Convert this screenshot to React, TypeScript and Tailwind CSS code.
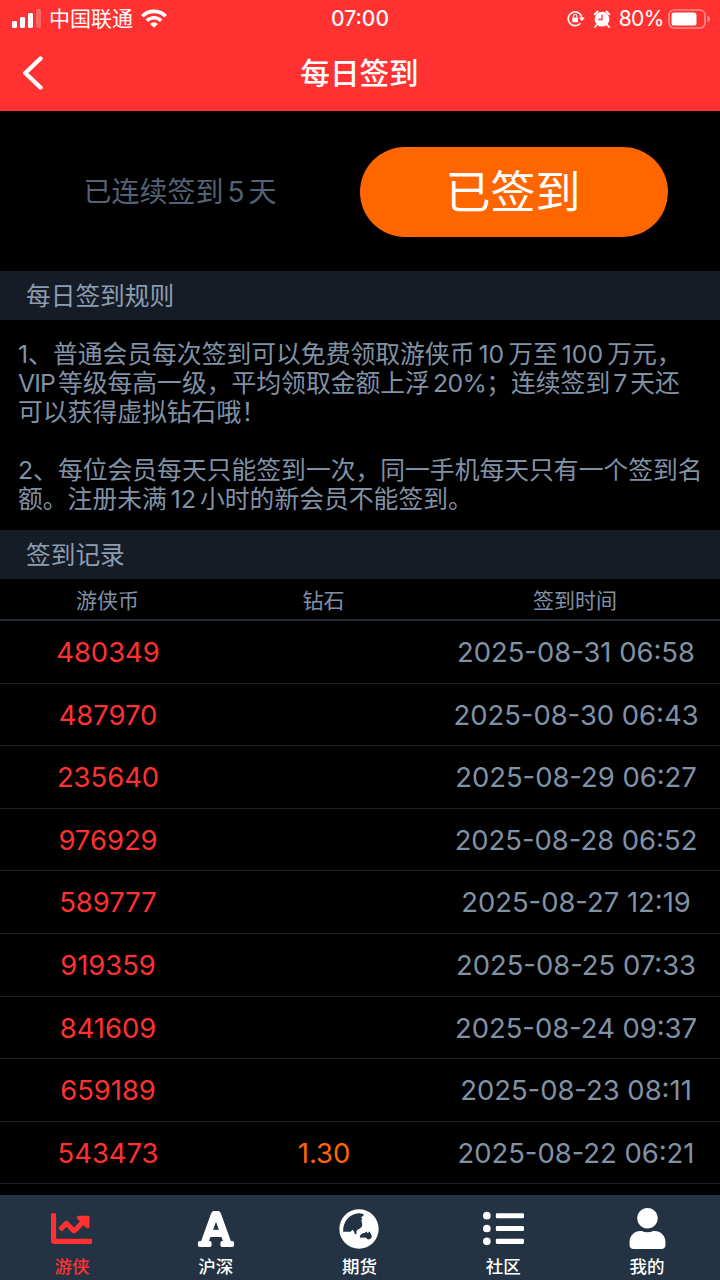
import type { ReactNode } from "react";
import { FaChartLine, FaFont, FaListUl, FaUser } from "react-icons/fa";
import clsx from "clsx";

const records = [
    { coins: "480349", diamond: "", time: "2025-08-31 06:58" },
    { coins: "487970", diamond: "", time: "2025-08-30 06:43" },
    { coins: "235640", diamond: "", time: "2025-08-29 06:27" },
    { coins: "976929", diamond: "", time: "2025-08-28 06:52" },
    { coins: "589777", diamond: "", time: "2025-08-27 12:19" },
    { coins: "919359", diamond: "", time: "2025-08-25 07:33" },
    { coins: "841609", diamond: "", time: "2025-08-24 09:37" },
    { coins: "659189", diamond: "", time: "2025-08-23 08:11" },
    { coins: "543473", diamond: "1.30", time: "2025-08-22 06:21" },
];

// Globe turned to Asia and Australia
function GlobeIcon() {
    return (
        <svg width="40" height="40" viewBox="118 83 120 121">
            <circle cx="178" cy="143.5" r="59.5" fill="currentColor" />
            <path
                d="M130 152C129 122 148 97 178 96L192 98L191 104L184 108L188 112L185 118L188 128L187 136L180 143L174 145L170 151L171 157L166 160L163 151L158 146L153 152Z"
                fill="#233343"
            />
            <path
                d="M180 164L188 157L196 155L200 151L205 156L209 150L215 160L217 168L212 174L205 175L199 170L190 169L182 170Z"
                fill="#233343"
            />
        </svg>
    );
}

const tabs = [
    { label: "游侠", icon: <FaChartLine size={41} />, active: true },
    { label: "沪深", icon: <FaFont size={40} stroke="currentColor" strokeWidth={14} className="overflow-visible" /> },
    { label: "期货", icon: <GlobeIcon /> },
    { label: "社区", icon: <FaListUl size={41} /> },
    { label: "我的", icon: <FaUser size={41} /> },
];

// Latin text inside a Chinese sentence gets a little air around it
function Num({ children }: { children: ReactNode }) {
    return <span className="mx-[4px]">{children}</span>;
}

function StatusBar() {
    return (
        <div className="grid h-[37px] grid-cols-3 items-center pl-[12px] pr-[9px] text-[21px] leading-none">
            <div className="flex items-center">
                <svg width="30" height="19" viewBox="0 0 30 19" fill="white">
                    <rect x="0" y="12" width="5" height="7" rx="1.4" />
                    <rect x="8" y="8" width="5" height="11" rx="1.4" />
                    <rect x="16" y="4" width="5" height="15" rx="1.4" />
                    <rect x="24" y="0" width="5" height="19" rx="1.4" opacity="0.25" />
                </svg>
                <span className="ml-[7px]">中国联通</span>
                <svg className="ml-[8px]" width="26" height="19" viewBox="0 0 26 19" fill="none" stroke="white" strokeWidth="3.6">
                    <path d="M1.3 7.2a16.6 16.6 0 0 1 23.4 0" />
                    <path d="M5.8 11.8a10.2 10.2 0 0 1 14.4 0" />
                    <path d="M13 18.8l-3.9-3.9a5.5 5.5 0 0 1 7.8 0z" fill="white" stroke="none" />
                </svg>
            </div>
            <div className="pr-[3px] text-center font-medium">07:00</div>
            <div className="flex items-center justify-end">
                <svg width="18" height="17" viewBox="0 0 19 18" fill="none" stroke="white" strokeWidth="1.7">
                    <path d="M14.2 14a7.3 7.3 0 1 1 1.6-6" />
                    <path d="M12.6 8h6.2l-3.1 4z" fill="white" stroke="none" />
                    <rect x="5.5" y="8" width="6.2" height="5" rx="0.8" fill="white" stroke="none" />
                    <path d="M6.8 8V6.6a1.8 1.8 0 0 1 3.6 0V8" strokeWidth="1.2" />
                </svg>
                <svg className="ml-[8px]" width="18" height="18" viewBox="0 0 18 18" fill="white">
                    <circle cx="9" cy="9.2" r="7.4" />
                    <path d="M3.6 15l-1.6 2M14.4 15l1.6 2" stroke="white" strokeWidth="1.8" strokeLinecap="round" />
                    <path d="M1.8 4.2L4.6 1.6M16.2 4.2L13.4 1.6" stroke="white" strokeWidth="2" strokeLinecap="round" />
                    <path d="M9 4.4v5.1H5.2" fill="none" stroke="#ff3131" strokeWidth="1.3" />
                </svg>
                <span className="ml-[8px] tracking-[-0.5px]">80%</span>
                <svg className="ml-[4px]" width="43" height="20" viewBox="0 0 43 20">
                    <rect x="1" y="1" width="36" height="18" rx="5" fill="none" stroke="white" strokeWidth="1.6" opacity="0.45" />
                    <rect x="3.5" y="3.5" width="25" height="13" rx="2.6" fill="white" />
                    <path d="M39.5 6.8q2.6 1.1 2.6 3.2t-2.6 3.2z" fill="white" opacity="0.45" />
                </svg>
            </div>
        </div>
    );
}

function SectionTitle({ children }: { children: ReactNode }) {
    return (
        <h2 className="flex h-[49px] items-center bg-[#151c26] pl-[26px] pt-[2px] text-[24.7px] leading-none text-[#8d9db0]">
            {children}
        </h2>
    );
}

export default function App() {
    return (
        <div className="flex h-[1280px] w-[720px] flex-col overflow-hidden bg-black font-[Inter,'Noto_Sans_CJK_SC',sans-serif] text-[#8192a7]">
            <header className="h-[111px] shrink-0 bg-[#ff3131] text-white">
                <StatusBar />
                <div className="grid h-[72px] grid-cols-[100px_1fr_100px] items-center">
                    <button className="pl-[22px]">
                        <svg width="22" height="34" viewBox="0 0 22 34" fill="none" stroke="white" strokeWidth="4.4" strokeLinecap="round" strokeLinejoin="round">
                            <path d="M18.5 2.5L3.3 17l15.2 14.5" />
                        </svg>
                    </button>
                    <h1 className="pr-[1px] pt-[2px] text-center text-[29.6px] font-medium leading-none">每日签到</h1>
                </div>
            </header>

            <section className="grid h-[160px] shrink-0 grid-cols-2 items-center">
                <p className="pt-[2px] text-center text-[28px] text-[#536274]">
                    已连续签到<Num>5</Num>天
                </p>
                <button className="mt-[1px] h-[90px] w-[308px] rounded-full bg-[#ff6600] pr-[2px] pt-[2px] text-[45px] leading-none text-white">
                    已签到
                </button>
            </section>

            <SectionTitle>每日签到规则</SectionTitle>
            <div className="h-[210px] shrink-0 whitespace-nowrap pl-[18px] pt-[20px] text-[24.8px] leading-[29px]">
                <p>
                    1、普通会员每次签到可以免费领取游侠币<Num>10</Num>万至<Num>100</Num>万元，
                    <br />
                    <span className="mr-[3px] tracking-[-0.9px]">VIP</span>等级每高一级，平均领取金额上浮
                    <span className="ml-[3px] tracking-[-0.6px]">20%</span>；连续签到
                    <span className="mx-[3px]">7</span>天还
                    <br />
                    可以获得虚拟钻石哦！
                </p>
                <p className="mt-[29px]">
                    2、每位会员每天只能签到一次，同一手机每天只有一个签到名
                    <br />
                    额。注册未满<Num>12</Num>小时的新会员不能签到。
                </p>
            </div>

            <SectionTitle>签到记录</SectionTitle>
            <div className="grid h-[42px] shrink-0 grid-cols-[216px_216px_1fr] items-center border-b-2 border-[#1f2a3a] pt-[2px] text-center text-[21px] leading-none">
                <span className="pr-[1px]">游侠币</span>
                <span className="pr-[1px]">钻石</span>
                <span className="pr-[2px]">签到时间</span>
            </div>
            <ul className="min-h-0 flex-1">
                {records.map((r) => (
                    <li
                        key={r.time}
                        className="grid h-[62.6px] grid-cols-[216px_216px_1fr] items-center border-b border-[#1a222c] pt-[2px] text-center text-[27.4px] leading-none"
                    >
                        <span className="text-[#ff3131]">{r.coins}</span>
                        <span className="text-[#ff6600]">{r.diamond}</span>
                        <span>{r.time}</span>
                    </li>
                ))}
            </ul>

            <nav className="grid h-[85px] shrink-0 grid-cols-5 bg-[#233343] pr-[1px]">
                {tabs.map(({ label, icon, active }) => (
                    <button
                        key={label}
                        className={clsx("flex flex-col items-center pt-[13px]", active ? "text-[#ff3131]" : "text-white")}
                    >
                        <span className="flex h-[41px] items-center">{icon}</span>
                        <span className="mt-[9px] text-[17.5px] font-medium leading-none">{label}</span>
                    </button>
                ))}
            </nav>
        </div>
    );
}
